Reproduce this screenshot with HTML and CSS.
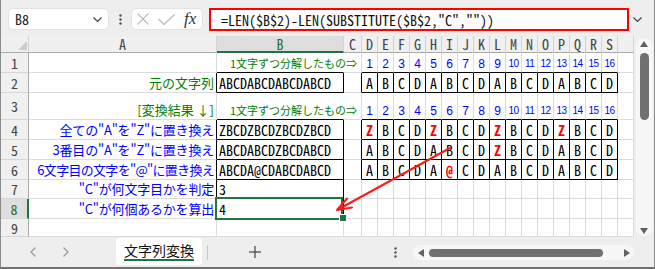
FILE: index.html
```html
<!DOCTYPE html>
<html lang="ja">
<head>
<meta charset="utf-8">
<title>文字列変換</title>
<link rel="stylesheet" href="styles.css">
</head>
<body>
<div class="app">
  <div class="fbar">
    <div class="namebox"><span>B8</span><svg class="chev" width="9" height="5" viewBox="0 0 9 5"><polyline points="0.5,0.5 4.5,4.5 8.5,0.5"/></svg></div>
    <div class="vdots"><svg width="3" height="11" viewBox="0 0 3 11"><circle cx="1.5" cy="1.5" r="1.2"/><circle cx="1.5" cy="5.5" r="1.2"/><circle cx="1.5" cy="9.5" r="1.2"/></svg></div>
    <div class="fbtns">
      <svg class="xmark" width="12" height="12" viewBox="0 0 12 12"><line x1="0.5" y1="0.5" x2="11.5" y2="11.5"/><line x1="11.5" y1="0.5" x2="0.5" y2="11.5"/></svg>
      <svg class="check" width="17" height="11" viewBox="0 0 17 11"><polyline points="0.5,5 6,10.5 16.5,0.5"/></svg>
      <span class="fx">fx</span>
    </div>
    <div class="formula">=LEN($B$2)-LEN(SUBSTITUTE($B$2,"C",""))</div>
    <div class="fchev"><svg class="chev" width="9" height="5" viewBox="0 0 9 5"><polyline points="0.5,0.5 4.5,4.5 8.5,0.5"/></svg></div>
  </div>

  <div class="main">
    <div class="sheet">
      <!-- header row -->
      <div class="c h corner"><svg width="9" height="9" viewBox="0 0 9 9"><polygon points="9,0 9,9 0,9"/></svg></div>
      <div class="c h">A</div>
      <div class="c h selc">B</div>
      <div class="c h">C</div>
      <div class="c h">D</div><div class="c h">E</div><div class="c h">F</div><div class="c h">G</div>
      <div class="c h">H</div><div class="c h">I</div><div class="c h">J</div><div class="c h">K</div>
      <div class="c h">L</div><div class="c h">M</div><div class="c h">N</div><div class="c h">O</div>
      <div class="c h">P</div><div class="c h">Q</div><div class="c h">R</div><div class="c h">S</div>
      <div class="c h"></div>

      <!-- row 1 -->
      <div class="c rh">1</div>
      <div class="c"></div>
      <div class="c bb nr"></div>
      <div class="c ov g"><span>1文字ずつ分解したもの⇒</span></div>
      <div class="c n bb">1</div><div class="c n bb">2</div><div class="c n bb">3</div><div class="c n bb">4</div>
      <div class="c n bb">5</div><div class="c n bb">6</div><div class="c n bb">7</div><div class="c n bb">8</div>
      <div class="c n bb">9</div><div class="c n n2 bb">10</div><div class="c n n2 bb">11</div><div class="c n n2 bb">12</div>
      <div class="c n n2 bb">13</div><div class="c n n2 bb">14</div><div class="c n n2 bb">15</div><div class="c n n2 bb">16</div>
      <div class="c"></div>

      <!-- row 2 -->
      <div class="c rh">2</div>
      <div class="c lbl g br">元の文字列</div>
      <div class="c m bx">ABCDABCDABCDABCD</div>
      <div class="c br"></div>
      <div class="c m ch bx">A</div><div class="c m ch bx">B</div><div class="c m ch bx">C</div><div class="c m ch bx">D</div>
      <div class="c m ch bx">A</div><div class="c m ch bx">B</div><div class="c m ch bx">C</div><div class="c m ch bx">D</div>
      <div class="c m ch bx">A</div><div class="c m ch bx">B</div><div class="c m ch bx">C</div><div class="c m ch bx">D</div>
      <div class="c m ch bx">A</div><div class="c m ch bx">B</div><div class="c m ch bx">C</div><div class="c m ch bx">D</div>
      <div class="c"></div>

      <!-- row 3 -->
      <div class="c rh">3</div>
      <div class="c lbl g">[変換結果 ↓]</div>
      <div class="c bb nr"></div>
      <div class="c ov g"><span>1文字ずつ分解したもの⇒</span></div>
      <div class="c n bb">1</div><div class="c n bb">2</div><div class="c n bb">3</div><div class="c n bb">4</div>
      <div class="c n bb">5</div><div class="c n bb">6</div><div class="c n bb">7</div><div class="c n bb">8</div>
      <div class="c n bb">9</div><div class="c n n2 bb">10</div><div class="c n n2 bb">11</div><div class="c n n2 bb">12</div>
      <div class="c n n2 bb">13</div><div class="c n n2 bb">14</div><div class="c n n2 bb">15</div><div class="c n n2 bb">16</div>
      <div class="c"></div>

      <!-- row 4 -->
      <div class="c rh">4</div>
      <div class="c lbl b br">全ての"A"を"Z"に置き換え</div>
      <div class="c m bx">ZBCDZBCDZBCDZBCD</div>
      <div class="c br"></div>
      <div class="c m ch bx red">Z</div><div class="c m ch bx">B</div><div class="c m ch bx">C</div><div class="c m ch bx">D</div>
      <div class="c m ch bx red">Z</div><div class="c m ch bx">B</div><div class="c m ch bx">C</div><div class="c m ch bx">D</div>
      <div class="c m ch bx red">Z</div><div class="c m ch bx">B</div><div class="c m ch bx">C</div><div class="c m ch bx">D</div>
      <div class="c m ch bx red">Z</div><div class="c m ch bx">B</div><div class="c m ch bx">C</div><div class="c m ch bx">D</div>
      <div class="c"></div>

      <!-- row 5 -->
      <div class="c rh">5</div>
      <div class="c lbl b br">3番目の"A"を"Z"に置き換え</div>
      <div class="c m bx">ABCDABCDZBCDABCD</div>
      <div class="c br"></div>
      <div class="c m ch bx">A</div><div class="c m ch bx">B</div><div class="c m ch bx">C</div><div class="c m ch bx">D</div>
      <div class="c m ch bx">A</div><div class="c m ch bx">B</div><div class="c m ch bx">C</div><div class="c m ch bx">D</div>
      <div class="c m ch bx red">Z</div><div class="c m ch bx">B</div><div class="c m ch bx">C</div><div class="c m ch bx">D</div>
      <div class="c m ch bx">A</div><div class="c m ch bx">B</div><div class="c m ch bx">C</div><div class="c m ch bx">D</div>
      <div class="c"></div>

      <!-- row 6 -->
      <div class="c rh">6</div>
      <div class="c lbl b tight br">6文字目の文字を"@"に置き換え</div>
      <div class="c m bx">ABCDA@CDABCDABCD</div>
      <div class="c br"></div>
      <div class="c m ch bx">A</div><div class="c m ch bx">B</div><div class="c m ch bx">C</div><div class="c m ch bx">D</div>
      <div class="c m ch bx">A</div><div class="c m ch bx red">@</div><div class="c m ch bx">C</div><div class="c m ch bx">D</div>
      <div class="c m ch bx">A</div><div class="c m ch bx">B</div><div class="c m ch bx">C</div><div class="c m ch bx">D</div>
      <div class="c m ch bx">A</div><div class="c m ch bx">B</div><div class="c m ch bx">C</div><div class="c m ch bx">D</div>
      <div class="c"></div>

      <!-- row 7 -->
      <div class="c rh">7</div>
      <div class="c lbl b br">"C"が何文字目かを判定</div>
      <div class="c m bx">3</div>
      <div class="c"></div>
      <div class="c"></div><div class="c"></div><div class="c"></div><div class="c"></div>
      <div class="c"></div><div class="c"></div><div class="c"></div><div class="c"></div>
      <div class="c"></div><div class="c"></div><div class="c"></div><div class="c"></div>
      <div class="c"></div><div class="c"></div><div class="c"></div><div class="c"></div>
      <div class="c"></div>

      <!-- row 8 -->
      <div class="c rh selr">8</div>
      <div class="c lbl b br">"C"が何個あるかを算出</div>
      <div class="c m bx sel">4</div>
      <div class="c"></div>
      <div class="c"></div><div class="c"></div><div class="c"></div><div class="c"></div>
      <div class="c"></div><div class="c"></div><div class="c"></div><div class="c"></div>
      <div class="c"></div><div class="c"></div><div class="c"></div><div class="c"></div>
      <div class="c"></div><div class="c"></div><div class="c"></div><div class="c"></div>
      <div class="c"></div>

      <!-- row 9 -->
      <div class="c rh">9</div>
      <div class="c"></div>
      <div class="c"></div>
      <div class="c"></div>
      <div class="c"></div><div class="c"></div><div class="c"></div><div class="c"></div>
      <div class="c"></div><div class="c"></div><div class="c"></div><div class="c"></div>
      <div class="c"></div><div class="c"></div><div class="c"></div><div class="c"></div>
      <div class="c"></div><div class="c"></div><div class="c"></div><div class="c"></div>
      <div class="c"></div>

      <svg class="arrow" width="633" height="201" viewBox="0 0 633 201">
        <line x1="449" y1="112" x2="337" y2="173.5"/>
        <polyline points="346,162.5 336,174 351,171.5"/>
      </svg>
    </div>

    <div class="vscroll">
      <div class="vtrack">
        <svg class="tri" width="8" height="6" viewBox="0 0 8 6"><polygon points="4,0 8,6 0,6"/></svg>
        <div class="vthumb"></div>
        <svg class="tri down" width="8" height="6" viewBox="0 0 8 6"><polygon points="0,0 8,0 4,6"/></svg>
      </div>
    </div>
  </div>

  <div class="tabbar">
    <div class="nav">
      <svg class="navc" width="6" height="10" viewBox="0 0 6 10"><polyline points="5.5,0.5 1,5 5.5,9.5"/></svg>
      <svg class="navc next" width="6" height="10" viewBox="0 0 6 10"><polyline points="0.5,0.5 5,5 0.5,9.5"/></svg>
    </div>
    <div class="tab"><span class="tabtext">文字列変換</span></div>
    <div class="sep"></div>
    <div class="plus"><svg width="12" height="12" viewBox="0 0 12 12"><line x1="6" y1="0" x2="6" y2="12"/><line x1="0" y1="6" x2="12" y2="6"/></svg></div>
    <div class="hdots"><svg width="3" height="11" viewBox="0 0 3 11"><circle cx="1.5" cy="1.5" r="1.2"/><circle cx="1.5" cy="5.5" r="1.2"/><circle cx="1.5" cy="9.5" r="1.2"/></svg></div>
    <div class="hscroll">
      <svg class="tri" width="6" height="8" viewBox="0 0 6 8"><polygon points="0,4 6,0 6,8"/></svg>
      <div class="hthumb"></div>
      <svg class="tri right" width="6" height="8" viewBox="0 0 6 8"><polygon points="0,0 6,4 0,8"/></svg>
    </div>
  </div>
</div>
</body>
</html>
```

FILE: styles.css
```css
* { box-sizing: border-box; margin: 0; padding: 0; }

body {
  width: 655px;
  height: 269px;
  overflow: hidden;
  background: #ffffff;
  font-family: "Noto Sans CJK JP", "Liberation Sans", sans-serif;
}

.app {
  width: 655px;
  height: 269px;
  border-left: 1px solid #8a8a8a;
  border-right: 1px solid #8a8a8a;
  border-bottom: 2px solid #707070;
  background: #eeeeee;
  display: flex;
  flex-direction: column;
}

/* ---------- formula bar ---------- */
.fbar {
  height: 36px;
  flex: none;
  display: flex;
  align-items: flex-start;
  padding: 8px 0 0 7px;
  background: #eeeeee;
}

.namebox {
  width: 101px;
  height: 22px;
  background: #ffffff;
  border: 1px solid #e2e2e2;
  border-radius: 5px;
  display: flex;
  align-items: center;
  justify-content: space-between;
  padding: 0 6px;
  font: 14px "Noto Sans Mono CJK JP", "Liberation Mono", monospace;
  color: #222;
}

.chev polyline { fill: none; stroke: #444; stroke-width: 1.2; }

.vdots {
  width: 22px;
  height: 22px;
  display: flex;
  align-items: center;
  justify-content: center;
}
.vdots circle, .hdots circle { fill: #555; }

.fbtns {
  width: 72px;
  height: 22px;
  background: #ffffff;
  border: 1px solid #e2e2e2;
  border-radius: 5px;
  display: flex;
  align-items: center;
  padding-left: 5px;
}
.xmark line { stroke: #bdbdbd; stroke-width: 1.3; }
.check { margin-left: 9px; }
.check polyline { fill: none; stroke: #bdbdbd; stroke-width: 1.3; }
.fx {
  margin-left: 9px;
  font: italic 17px "Liberation Serif", serif;
  color: #333;
  line-height: 20px;
}

.formula {
  margin-left: 6px;
  width: 420px;
  height: 23px;
  background: #ffffff;
  border: 2px solid #ff0000;
  padding-left: 10px;
  display: flex;
  align-items: center;
  font: 14px "Noto Sans Mono CJK JP", "Liberation Mono", monospace;
  color: #111;
  white-space: nowrap;
}

.fchev {
  width: 16px;
  height: 22px;
  display: flex;
  align-items: center;
  justify-content: center;
}

/* ---------- sheet ---------- */
.main {
  display: flex;
  height: 201px;
  flex: none;
}

.sheet {
  position: relative;
  width: 633px;
  height: 201px;
  display: grid;
  grid-template-columns: 28px 188px 127px 18px repeat(17, 16px);
  grid-template-rows: 17px 20px 20px 27px 20px 20px 20px 19px 20px 18px;
  background: #ffffff;
}

.c {
  border-right: 1px solid #dcdcdc;
  border-bottom: 1px solid #dcdcdc;
  display: flex;
  align-items: flex-end;
  white-space: nowrap;
  line-height: 16px;
  padding: 0 2px 1px;
  min-width: 0;
  font-size: 13px;
  color: #000;
}

.h, .rh {
  background: #f0f0f0;
  align-items: center;
  justify-content: center;
  padding: 0;
  font: 14px "Noto Sans Mono CJK JP", "Liberation Mono", monospace;
  color: #444;
}
.h { border-right-color: #d3d3d3; border-bottom-color: #a9a9a9; }
.rh { border-right-color: #a9a9a9; border-bottom-color: #d6d6d6; }

.corner { justify-content: flex-end; align-items: flex-end; padding: 0 1px 2px 0; }
.corner polygon { fill: #cdcdcd; }

.selc {
  background: #dedede;
  color: #1e6e3c;
  border-bottom: 2px solid #217346;
}
.selr {
  background: #dedede;
  color: #1e6e3c;
  border-right: 2px solid #217346;
}

.lbl { justify-content: flex-end; }
.g { color: #008000; }
.b { color: #0000ff; letter-spacing: -0.2px; }
.b.tight { letter-spacing: -0.7px; }

.m {
  font: 14px "Noto Sans Mono CJK JP", "Liberation Mono", monospace;
  line-height: 16px;
  letter-spacing: 0;
}
.ch { justify-content: center; padding: 0 0 1px; }
.red { color: #ff0000; font-weight: bold; }

.n {
  color: #0000ff;
  font: 12px "Liberation Sans", sans-serif;
  line-height: 14px;
  justify-content: center;
  padding: 0 0 1px;
}
.n2 { font-size: 10px; letter-spacing: -0.6px; }

.ov {
  justify-content: flex-end;
  padding-right: 4px;
  font-size: 11px;
  line-height: 14px;
  padding-bottom: 2px;
}

.bx { border-right-color: #000; border-bottom-color: #000; }
.br { border-right-color: #000; }
.bb { border-bottom-color: #000; }
.nr { border-right-color: transparent; }

.sel { position: relative; }
.sel::after {
  content: "";
  position: absolute;
  left: -2px;
  top: -2px;
  right: 0;
  bottom: -2px;
  border: 2px solid #217346;
}
.sel::before {
  content: "";
  position: absolute;
  right: -4px;
  bottom: -4px;
  width: 6px;
  height: 6px;
  background: #217346;
  border: 1px solid #ffffff;
  z-index: 1;
}

.arrow {
  position: absolute;
  left: 0;
  top: 0;
  pointer-events: none;
}
.arrow line, .arrow polyline {
  fill: none;
  stroke: #ff1a1a;
  stroke-width: 2;
  stroke-linecap: round;
  stroke-linejoin: round;
}

/* ---------- vertical scrollbar ---------- */
.vscroll {
  width: 20px;
  height: 201px;
  background: #eeeeee;
  display: flex;
  justify-content: center;
  padding: 2px 0 1px;
}
.vtrack {
  width: 17px;
  height: 100%;
  background: #f7f7f7;
  border-radius: 8px;
  display: flex;
  flex-direction: column;
  align-items: center;
  padding-top: 3px;
}
.tri polygon { fill: #606060; }
.vthumb {
  margin-top: 6px;
  width: 9px;
  height: 67px;
  border-radius: 5px;
  background: #707070;
}
.tri.down { margin-top: auto; margin-bottom: 2px; }

/* ---------- sheet tabs ---------- */
.tabbar {
  height: 30px;
  flex: none;
  display: flex;
  align-items: flex-start;
  background: #eeeeee;
}
.nav {
  width: 115px;
  height: 30px;
  display: flex;
  align-items: center;
  padding-left: 29px;
}
.navc polyline { fill: none; stroke: #9a9a9a; stroke-width: 1.3; }
.navc.next { margin-left: 27px; }

.tab {
  width: 86px;
  height: 27px;
  margin-top: 1px;
  background: #ffffff;
  border-radius: 4px;
  display: flex;
  justify-content: center;
  padding-top: 4px;
}
.tabtext {
  font-size: 14px;
  line-height: 16px;
  height: 19px;
  padding-bottom: 1px;
  border-bottom: 2px solid #217346;
  color: #111;
}

.sep {
  width: 1px;
  height: 15px;
  margin: 8px 0 0 5px;
  background: #c8c8c8;
}
.plus {
  width: 94px;
  height: 30px;
  display: flex;
  align-items: center;
  justify-content: center;
}
.plus line { stroke: #444; stroke-width: 1.2; }

.hdots {
  width: 22px;
  height: 30px;
  margin-left: 82px;
  display: flex;
  align-items: center;
  justify-content: center;
}

.hscroll {
  width: 221px;
  height: 15px;
  margin: 8px 0 0 7px;
  background: #f7f7f7;
  border-radius: 8px;
  display: flex;
  align-items: center;
  padding: 0 4px 0 5px;
}
.hthumb {
  width: 174px;
  height: 8px;
  margin-left: 5px;
  border-radius: 4px;
  background: #717171;
}
.tri.right { margin-left: auto; }
```
